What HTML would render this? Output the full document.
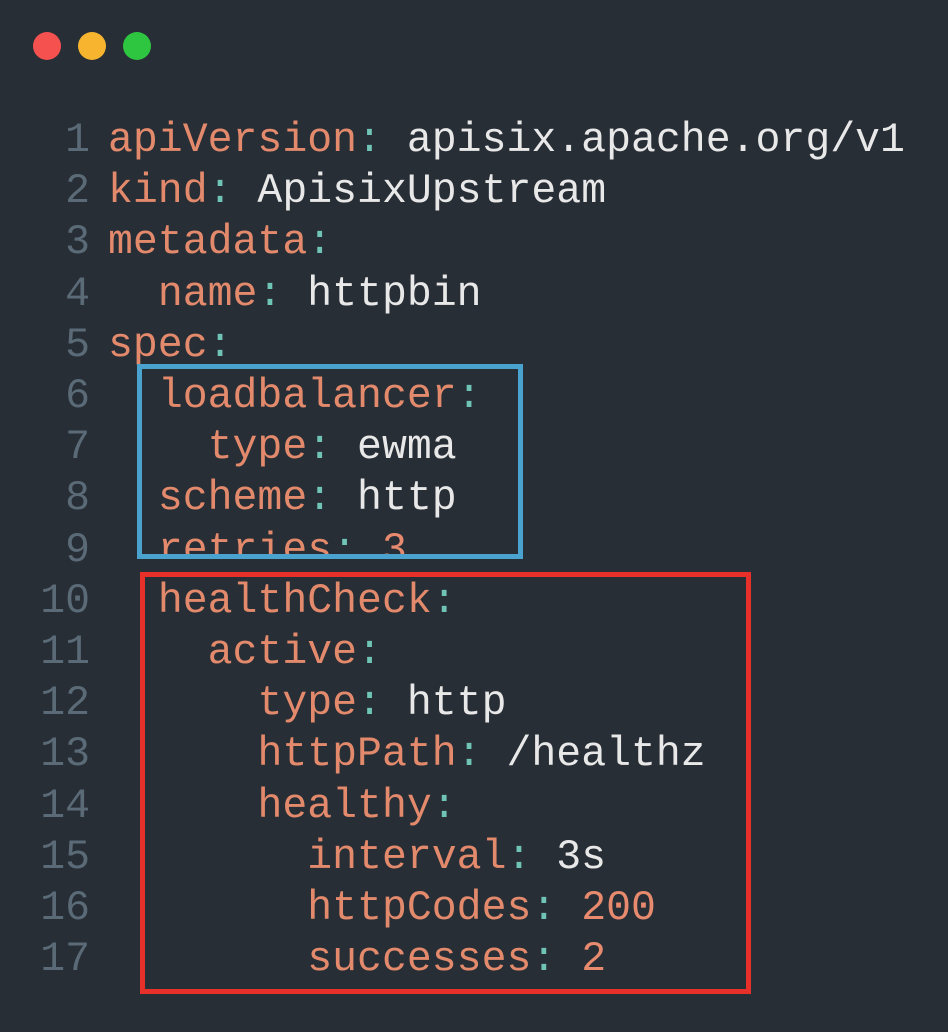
<!DOCTYPE html>
<html><head><meta charset="utf-8"><style>
html,body{margin:0;padding:0;width:948px;height:1032px;background:#272e36;overflow:hidden}
.dot{position:absolute;top:32px;width:28px;height:28px;border-radius:50%}
.code{position:absolute;left:0;top:115px;font-family:"Liberation Mono","DejaVu Sans Mono",monospace;font-size:41.5px;line-height:51.2px;white-space:pre;color:#e8e8e8}
.ln{display:inline-block;width:90px;text-align:right;color:#5b6a77;margin-right:18px}
.k{color:#e48a6c}.c{color:#6fc4b6}.n{color:#e88a6e}
.box{position:absolute;border-style:solid;border-width:5px}
</style></head><body>
<div class="dot" style="left:33px;background:#f4514f"></div>
<div class="dot" style="left:78px;background:#f7b52f"></div>
<div class="dot" style="left:123px;background:#2ec640"></div>
<div class="code"><span class="ln">1</span><span class="k">apiVersion</span><span class="c">:</span> apisix.apache.org/v1
<span class="ln">2</span><span class="k">kind</span><span class="c">:</span> ApisixUpstream
<span class="ln">3</span><span class="k">metadata</span><span class="c">:</span>
<span class="ln">4</span>  <span class="k">name</span><span class="c">:</span> httpbin
<span class="ln">5</span><span class="k">spec</span><span class="c">:</span>
<span class="ln">6</span>  <span class="k">loadbalancer</span><span class="c">:</span>
<span class="ln">7</span>    <span class="k">type</span><span class="c">:</span> ewma
<span class="ln">8</span>  <span class="k">scheme</span><span class="c">:</span> http
<span class="ln">9</span>  <span class="k">retries</span><span class="c">:</span> <span class="n">3</span>
<span class="ln">10</span>  <span class="k">healthCheck</span><span class="c">:</span>
<span class="ln">11</span>    <span class="k">active</span><span class="c">:</span>
<span class="ln">12</span>      <span class="k">type</span><span class="c">:</span> http
<span class="ln">13</span>      <span class="k">httpPath</span><span class="c">:</span> /healthz
<span class="ln">14</span>      <span class="k">healthy</span><span class="c">:</span>
<span class="ln">15</span>        <span class="k">interval</span><span class="c">:</span> 3s
<span class="ln">16</span>        <span class="k">httpCodes</span><span class="c">:</span> <span class="n">200</span>
<span class="ln">17</span>        <span class="k">successes</span><span class="c">:</span> <span class="n">2</span></div>
<div style="position:absolute;left:137px;top:558px;width:390px;height:13px;background:#272e36"></div>
<div class="box" style="left:137px;top:364px;width:376px;height:185px;border-color:#4aa3cf"></div>
<div class="box" style="left:140px;top:572px;width:601px;height:412px;border-color:#e8302a"></div>
</body></html>
